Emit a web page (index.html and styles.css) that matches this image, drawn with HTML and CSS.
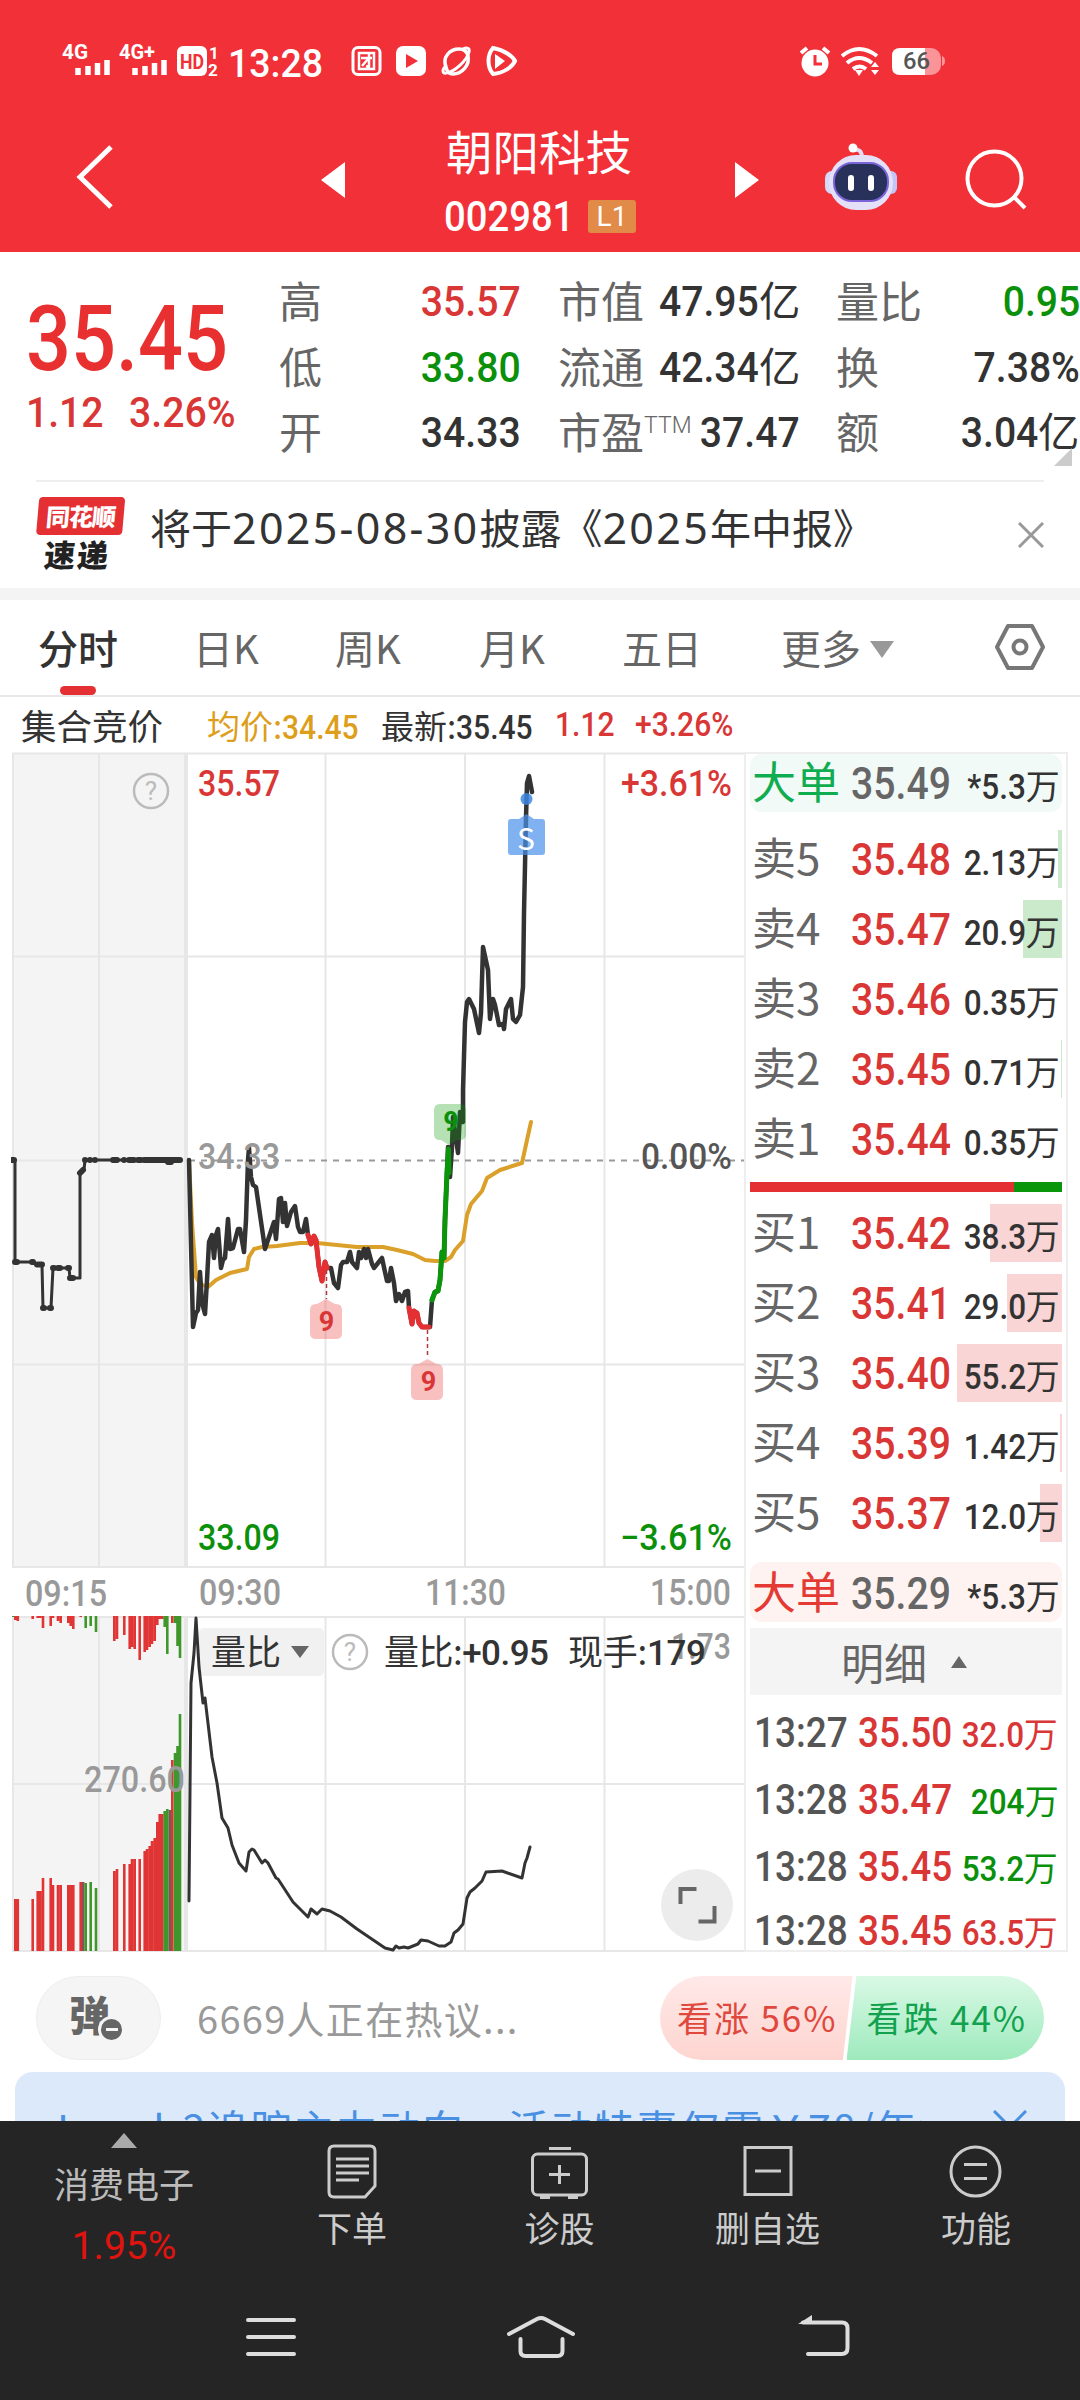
FILE: index.html
```html
<!DOCTYPE html>
<html lang="zh-CN">
<head>
    <meta charset="UTF-8">
    <meta name="viewport" content="width=device-width, initial-scale=1.0">
    <title>朝阳科技 002981</title>
    <link rel="stylesheet" href="styles.css">
</head>
<body>
    <header>
        <div class="status-bar">
            <svg class="status-left" width="470" height="60" viewBox="60 31 470 60" fill="#fff">
                <g class="status-net">
                    <text x="62" y="59" textLength="26" lengthAdjust="spacingAndGlyphs">4G</text>
                    <text x="119" y="59" textLength="36" lengthAdjust="spacingAndGlyphs">4G+</text>
                </g>
                <path d="M78 75v-7M88 75v-9M97.500 75v-12M107 75v-15M135 75v-7M145 75v-9M154.500 75v-12M164 75v-15" stroke="#fff" stroke-width="5.500"/>
                <rect x="177" y="46" width="30" height="30" rx="6"/>
                <text class="status-hd" x="180" y="69" textLength="24" lengthAdjust="spacingAndGlyphs">HD</text>
                <text class="status-sim" x="209" y="59">1</text>
                <text class="status-sim" x="208" y="76">2</text>
                <text class="status-time" x="228" y="77" textLength="95" lengthAdjust="spacingAndGlyphs">13:28</text>
                <rect x="353" y="47.500" width="27" height="27" rx="5" fill="none" stroke="#fff" stroke-width="3"/>
                <path d="M359 53h15v16h-15zM361 58h11M369 54v13l-3-1M368 59l-6 7" fill="none" stroke="#fff" stroke-width="2.500"/>
                <rect x="396" y="46" width="30" height="30" rx="7"/>
                <path d="M406 54l12 7-12 7z" fill="#f13038"/>
                <path d="M446 67c-4-10 4-18 13-18 5 0 8 2 9 7 2 9-6 18-15 18-3 0-6-2-7-7z" fill="none" stroke="#fff" stroke-width="3.500"/>
                <path d="M446 66c-4 3-4 8 0 7 9-1 21-13 23-21 1-4-2-5-6-3" fill="none" stroke="#fff" stroke-width="3"/>
                <path d="M493 48c12 2 20 9 22 13-3 6-11 12-22 13-6-7-6-19 0-26z" fill="none" stroke="#fff" stroke-width="4"/>
                <path d="M495 54l10 7-10 8z"/>
            </svg>
            <svg class="status-right" width="150" height="60" viewBox="798 31 150 60" fill="none" stroke="#fff">
                <circle cx="815" cy="63" r="13.500" fill="#fff" stroke="none"/>
                <path d="M801 53l6-5M829 53l-6-5" stroke-width="4"/>
                <path d="M815 55v9h7" stroke="#f13038" stroke-width="3"/>
                <path d="M842 56q17-14 35 0M847 63q12-10 25 0M853 69q7-5 13 0" stroke-width="4"/>
                <path d="M855 70h8l-4 6z" fill="#fff" stroke="none"/>
                <path d="M871 67l4-5 4 5zM871 70l4 5 4-5z" fill="#fff" stroke="none"/>
                <path d="M900 48h31a10 10 0 0 1 10 10v7a10 10 0 0 1-10 10h-31z" fill="#fa9499" stroke="none"/>
                <path d="M942 56q3 1 3 5t-3 5z" fill="#fa9499" stroke="none"/>
                <path d="M925 48h-25q-8 0-8 8v11q0 8 8 8h25z" fill="#fff" stroke="none"/>
                <text class="status-battery" x="903" y="69" textLength="27" lengthAdjust="spacingAndGlyphs">66</text>
            </svg>
        </div>
        <div class="title-bar">
            <svg class="back" width="40" height="66" viewBox="0 0 40 66" fill="none" stroke="#fff" stroke-width="5"><path d="M36 3L5 33l31 30"/></svg>
            <svg class="prev" width="24" height="36" viewBox="0 0 24 36" fill="#fff"><path d="M24 0v36L0 18z"/></svg>
            <div class="stock-title">
                <h1>朝阳科技</h1>
                <p><span class="num">002981</span><span class="level">L1</span></p>
            </div>
            <svg class="next" width="24" height="36" viewBox="0 0 24 36" fill="#fff"><path d="M0 0v36l24-18z"/></svg>
            <svg class="robot" width="74" height="70" viewBox="824 142 74 70">
                <path d="M862 158c0-7-3-9-8-8" fill="none" stroke="#e3dcf8" stroke-width="4"/>
                <circle cx="853" cy="148" r="4.500" fill="#fff"/>
                <rect x="825" y="171" width="14" height="23" rx="7" fill="#d6d8f8"/>
                <rect x="884" y="171" width="13" height="23" rx="6" fill="#c3c5f6"/>
                <rect x="829" y="155" width="64" height="55" rx="27" fill="#e3e0f8"/>
                <rect x="834" y="163" width="54" height="38" rx="18" fill="#28315a" stroke="#7a64d8" stroke-width="2"/>
                <path d="M851 178v10M871 178v10" stroke="#fff" stroke-width="6" stroke-linecap="round"/>
            </svg>
            <svg class="search" width="62" height="62" viewBox="965 149 62 62" fill="none" stroke="#fff" stroke-width="4"><circle cx="994.500" cy="178.500" r="27"/><path d="M1014 197l11 11"/></svg>
        </div>
    </header>

    <section class="quote">
        <div class="quote-price">
            <div class="price-now num">35.45</div>
            <div class="price-change num"><span>1.12</span><span>3.26%</span></div>
        </div>
        <dl class="quote-grid">
            <dt>高</dt><dd class="num red">35.57</dd>
            <dt>市值</dt><dd class="num">47.95<i>亿</i></dd>
            <dt>量比</dt><dd class="num green">0.95</dd>
            <dt>低</dt><dd class="num green">33.80</dd>
            <dt>流通</dt><dd class="num">42.34<i>亿</i></dd>
            <dt>换</dt><dd class="num">7.38%</dd>
            <dt>开</dt><dd class="num">34.33</dd>
            <dt>市盈<sup>TTM</sup></dt><dd class="num">37.47</dd>
            <dt>额</dt><dd class="num">3.04<i>亿</i></dd>
        </dl>
        <span class="corner"></span>
    </section>

    <section class="notice">
        <div class="notice-logo"><b>同花顺</b><strong>速递</strong></div>
        <p>将于<span>2025-08-30</span>披露《<span>2025</span>年中报》</p>
        <svg width="26" height="26" viewBox="0 0 26 26" stroke="#999" stroke-width="3"><path d="M1 1l24 24M25 1L1 25"/></svg>
    </section>

    <nav class="tabs">
        <a class="active">分时</a>
        <a>日K</a>
        <a>周K</a>
        <a>月K</a>
        <a>五日</a>
        <a class="more">更多<i></i></a>
        <svg width="50" height="48" viewBox="0 0 50 48" fill="none" stroke="#777" stroke-width="4"><path d="M13 3h24l11 21-11 21H13L2 24z" stroke-linejoin="round"/><circle cx="25" cy="24" r="6.500"/></svg>
    </nav>

    <div class="info-line">
        <span>集合竞价</span>
        <span class="avg">均价:<b class="num">34.45</b></span>
        <span class="last">最新:<b class="num">35.45</b></span>
        <b class="num red">1.12</b>
        <b class="num red">+3.26%</b>
    </div>

    <main>
        <svg class="chart" width="733" height="1202" viewBox="11 752 733 1202">
            <rect x="13" y="753" width="174" height="814" fill="#f4f4f4"/>
            <rect x="13" y="1617" width="174" height="334" fill="#f4f4f4"/>
            <g class="grid">
                <path d="M12 753.500H744M12 956.500H744M12 1364.500H744M12 1567H744M12 1617H744M12 1784H744M12 1951H744"/>
                <path d="M13 753V1567M99 753V1567M325.500 753V1567M465 753V1567M604.500 753V1567M13 1617V1951M99 1617V1951M325.500 1617V1951M465 1617V1951M604.500 1617V1951"/>
                <path class="split" d="M186 753V1567M186 1617V1951"/>
                <path d="M13 1160.500H187"/>
            </g>
            <path d="M189 1160.500H744" stroke="#999" stroke-width="2" stroke-dasharray="6 6"/>

            <!-- auction volume -->
            <g stroke-width="2.600" fill="none">
                <path stroke="#e03534" d="M15.300 1951V1899M17.800 1951V1899M32.700 1951V1899M37.700 1951V1891M40.300 1951V1891M43 1951V1878M50.700 1951V1878M53 1951V1885M58 1951V1885M60.700 1951V1885M68.300 1951V1885M70.700 1951V1885M73.300 1951V1885M80.700 1951V1882M114.300 1951V1871M117 1951V1869M124.300 1951V1864M129.700 1951V1864M132 1951V1859M134.700 1951V1859M139.700 1951V1859M144.700 1951V1851M147 1951V1849M149.700 1951V1846M152 1951V1841M154.700 1951V1838M157.300 1951V1822M159.700 1951V1814M162.300 1951V1814M172.300 1951V1760"/>
                <path stroke="#805555" d="M83.200 1951V1882M169.800 1951V1810"/>
                <path stroke="#3f972b" d="M85.700 1951V1883M90.700 1951V1882M96 1951V1888M164.700 1951V1811M167.300 1951V1809M175 1951V1753M177.500 1951V1746M180 1951V1714"/>
                <path stroke="#e03534" d="M15.300 1616V1620M17.800 1616V1621M32.700 1616V1619M37.700 1616V1618M40.300 1616V1618M43 1616V1628M50.700 1616V1626M53 1616V1618M58 1616V1621M60.700 1616V1623M68.300 1616V1623M70.700 1616V1626M73.300 1616V1629M80.700 1616V1617M114.300 1616V1641M117 1616V1639M124.300 1616V1635M129.700 1616V1649M132 1616V1647M134.700 1616V1649M139.700 1616V1660M144.700 1616V1652M147 1616V1650M149.700 1616V1647M152 1616V1644M154.700 1616V1641M157.300 1616V1625M159.700 1616V1619M162.300 1616V1619M172.300 1616V1623"/>
                <path stroke="#3f972b" d="M13.300 1616V1617M85.700 1616V1628M90.700 1616V1626M96 1616V1632M164.700 1616V1627M167.300 1616V1654M175 1616V1623M177.500 1616V1646M180 1616V1658"/>
            </g>

            <!-- auction price -->
            <path class="line thin" d="M12 1160H15V1262H33L37 1265H42L43 1308H51L53 1268H69L70 1278H80V1173L84 1170L85 1160H181"/>
            <path class="line dots" d="M12 1160h2M15 1262h2M32 1262l1 0M37 1264.500h5M43 1308h1M50 1308h1M53 1268h1M58 1268h2M68 1268h1M70 1278h3M80 1173l3-3M85 1160h0M90 1160h0M95 1160h0M113 1160h4M124 1160h0M129 1160h5M138 1160h3M144 1160h36M168 1162h3"/>

            <!-- average and price -->
            <path class="line avg-line" d="M189 1160L192 1223L196 1277L200 1284L208 1287L216 1280L230 1273L247 1269L249 1257L254 1249L262 1247L277 1246L300 1243L317 1243L337 1245L357 1247L383 1247L397 1250L413 1254L425 1260L435 1261L445 1261L451 1257L455 1250L463 1241L467 1215L471 1204L482 1191L487 1178L500 1170L522 1163L527 1140L531 1122"/>
            <path class="line" d="M189 1160L193 1327L196 1313L198 1310L200 1272L202 1303L205 1314L207 1280L209 1242L212 1235L214 1258L216 1235L218 1229L221 1268L223 1260L225 1258L228 1219L230 1249L233 1248L238 1229L240 1229L244 1252L246 1220L248 1160L249 1148L251 1177L253 1185L256 1187L265 1249L274 1222L276 1239L279 1199L281 1198L283 1222L285 1203L287 1226L291 1212L295 1206L298 1227L300 1232L303 1232L306 1219L308 1235L311 1244L314 1236L316 1240L319 1267L322 1281L325 1262L327 1268L331 1268L334 1283L338 1288L341 1265L343 1262L347 1262L350 1252L352 1262L357 1268L359 1252L361 1258L364 1249L366 1258L368 1249L372 1264L374 1268L382 1258L385 1272L387 1281L389 1281L391 1268L394 1283L396 1301L399 1294L402 1301L405 1292L408 1291L409 1308L412 1324L414 1311L417 1313L419 1323L422 1327L430 1327L432 1300L435 1292L438 1291L440 1280L442 1252L444 1258L445 1220L447 1173L448 1147L450 1177L452 1147L453 1117L458 1153L460 1112L463 1122L463 1090L465 1022L467 1002L469 999L474 1009L479 1033L481 1013L483 947L488 970L490 1019L493 999L495 1005L499 1025L503 1024L504 1029L506 1009L511 999L513 1019L516 1022L520 1015L523 987L524 913L526 818L527 783L529 776L532 792"/>
            <path class="line red-line" d="M308 1235L311 1244L314 1236L316 1240L319 1267L322 1281L325 1262L327 1268M409 1308L412 1324L414 1311L417 1313L419 1323L422 1327L429 1327"/>
            <path class="line green-line" d="M432 1300L435 1292L438 1291L440 1280L442 1252L444 1258L445 1220L447 1173L448.500 1149L449 1173"/>

            <!-- nine-turn marks -->
            <path d="M326.500 1270V1299M427.500 1330V1358" stroke="#b03a3a" stroke-width="1.500" stroke-dasharray="4 3"/>
            <g fill="#ee4040" fill-opacity=".33">
                <path d="M317 1304l9-5 9 5h1q6 0 6 6v23q0 6-6 6h-20q-6 0-6-6v-23q0-6 6-6z"/>
                <path d="M418.500 1364l9-5 9 5h.500q6 0 6 6v24q0 6-6 6h-20q-6 0-6-6v-24q0-6 6-6z"/>
            </g>
            <path d="M440 1104h20q6 0 6 6v24q0 6-6 6h-3l-8 5-8-5h-1q-6 0-6-6v-24q0-6 6-6z" fill="#0a9a0a" fill-opacity=".3"/>
            <text class="mark red" x="326.500" y="1331">9</text>
            <text class="mark red" x="428.500" y="1391">9</text>
            <text class="mark green" x="451" y="1131">9</text>
            <circle cx="526.500" cy="799" r="6" fill="#3c86e0" fill-opacity=".85"/>
            <path d="M519 819l7.500-5 7.500 5h8q3 0 3 3v30q0 3-3 3h-31q-3 0-3-3v-30q0-3 3-3z" fill="#4a90ea" fill-opacity=".7"/>
            <text class="mark sell" x="526" y="850">S</text>

            <!-- axis labels -->
            <g class="axis">
                <text class="red" x="198" y="796" textLength="82" lengthAdjust="spacingAndGlyphs">35.57</text>
                <text x="198" y="1169" textLength="82" lengthAdjust="spacingAndGlyphs" fill="#999">34.33</text>
                <text class="green" x="198" y="1550" textLength="82" lengthAdjust="spacingAndGlyphs">33.09</text>
                <text class="red" x="621" y="796" textLength="111" lengthAdjust="spacingAndGlyphs">+3.61%</text>
                <text x="641" y="1169" textLength="91" lengthAdjust="spacingAndGlyphs" fill="#555">0.00%</text>
                <text class="green" x="620" y="1550" textLength="112" lengthAdjust="spacingAndGlyphs">−3.61%</text>
                <text x="25" y="1606" textLength="82" lengthAdjust="spacingAndGlyphs" fill="#999">09:15</text>
                <text x="199" y="1605" textLength="82" lengthAdjust="spacingAndGlyphs" fill="#999">09:30</text>
                <text x="425" y="1605" textLength="81" lengthAdjust="spacingAndGlyphs" fill="#999">11:30</text>
                <text x="650" y="1605" textLength="81" lengthAdjust="spacingAndGlyphs" fill="#999">15:00</text>
                <text x="84" y="1792" textLength="101" lengthAdjust="spacingAndGlyphs" fill="#999">270.60</text>
                <text x="671" y="1659" textLength="60" lengthAdjust="spacingAndGlyphs" fill="#999">1.73</text>
            </g>
            <g class="help">
                <circle cx="151" cy="791" r="17"/><text x="151" y="800">?</text>
            </g>

            <!-- volume ratio -->
            <rect x="199" y="1628" width="125" height="48" rx="5" fill="#f1f1f1"/>
            <path d="M291 1646h18l-9 12z" fill="#666"/>
            <path class="line thin" d="M189 1901L191 1683L194 1653L196 1618L199 1667L203 1703L205 1698L212 1757L217 1783L222 1818L228 1828L232 1845L239 1863L246 1871L249 1852L252 1849L254 1850L262 1863L265 1860L268 1863L276 1878L278 1879L293 1902L308 1917L311 1909L317 1914L322 1909L330 1911L341 1917L357 1929L385 1948L393 1950L396 1946L399 1948L404 1947L408 1948L418 1944L421 1940L428 1941L439 1946L445 1946L451 1942L454 1933L458 1930L463 1924L467 1898L470 1892L475 1888L482 1881L486 1872L502 1871L522 1878L525 1863L527 1858L530 1847"/>
            <g class="help">
                <circle cx="350" cy="1652" r="17"/><text x="350" y="1661">?</text>
            </g>
            <g class="indicator">
                <text x="211" y="1665" textLength="70">量比</text>
                <text x="384" y="1665" textLength="165">量比:<tspan class="digits">+0.95</tspan></text>
                <text x="568" y="1665" textLength="138">现手:<tspan class="digits">179</tspan></text>
            </g>
            <circle cx="697" cy="1905" r="36" fill="#ececec"/>
            <path d="M680.500 1904v-15h16M714.500 1906v15.500h-16" fill="none" stroke="#666" stroke-width="4"/>
        </svg>

        <aside class="book">
            <div class="row big sell-big"><span>大单</span><b>35.49</b><em>*5.3<i>万</i></em></div>
            <div class="levels asks">
                <div class="row"><span>卖5</span><b>35.48</b><em>2.13<i>万</i></em><u style="width:4px"></u></div>
                <div class="row"><span>卖4</span><b>35.47</b><em>20.9<i>万</i></em><u style="width:39px"></u></div>
                <div class="row"><span>卖3</span><b>35.46</b><em>0.35<i>万</i></em></div>
                <div class="row"><span>卖2</span><b>35.45</b><em>0.71<i>万</i></em><u style="width:1px"></u></div>
                <div class="row"><span>卖1</span><b>35.44</b><em>0.35<i>万</i></em></div>
            </div>
            <div class="ratio"><i style="width:264px"></i></div>
            <div class="levels bids">
                <div class="row"><span>买1</span><b>35.42</b><em>38.3<i>万</i></em><u style="width:72px"></u></div>
                <div class="row"><span>买2</span><b>35.41</b><em>29.0<i>万</i></em><u style="width:55px"></u></div>
                <div class="row"><span>买3</span><b>35.40</b><em>55.2<i>万</i></em><u style="width:105px"></u></div>
                <div class="row"><span>买4</span><b>35.39</b><em>1.42<i>万</i></em><u style="width:2px"></u></div>
                <div class="row"><span>买5</span><b>35.37</b><em>12.0<i>万</i></em><u style="width:22px"></u></div>
            </div>
            <div class="row big buy-big"><span>大单</span><b>35.29</b><em>*5.3<i>万</i></em></div>
            <div class="detail-head">明细<i></i></div>
            <div class="ticks">
                <div><span>13:27</span><b>35.50</b><em class="red">32.0<i>万</i></em></div>
                <div><span>13:28</span><b>35.47</b><em class="green">204<i>万</i></em></div>
                <div><span>13:28</span><b>35.45</b><em class="green">53.2<i>万</i></em></div>
                <div><span>13:28</span><b>35.45</b><em class="red">63.5<i>万</i></em></div>
            </div>
        </aside>
    </main>

    <section class="comment">
        <div class="danmu"><span>弹</span><i></i></div>
        <p>6669人正在热议...</p>
        <div class="vote">
            <div class="up">看涨 56%</div>
            <div class="down">看跌 44%</div>
        </div>
    </section>

    <div class="promo">
        <p>Level-2追踪主力动向，活动特惠仅需￥78/年&gt;</p>
        <svg width="34" height="34" viewBox="0 0 34 34" stroke="#4a90e2" stroke-width="3"><path d="M1 1l32 32M33 1L1 33"/></svg>
    </div>

    <footer>
        <div class="toolbar">
            <div class="sector"><i></i><span>消费电子</span><b>1.95%</b></div>
            <div class="tool">
                <svg width="60" height="58" viewBox="322 2142 60 58"><path d="M334 2146h36q5 0 5 5v35l-10 11h-31q-5 0-5-5v-41q0-5 5-5z"/><path d="M336 2159h33M336 2166h33M336 2173h33M336 2180h23"/></svg>
                <span>下单</span>
            </div>
            <div class="tool">
                <svg width="60" height="58" viewBox="530 2142 60 58"><rect x="532.500" y="2154" width="54" height="41" rx="5"/><path d="M549 2148.500h22M559.500 2165v19M549 2174.500h21M540 2197.500h10M568 2197.500h10"/></svg>
                <span>诊股</span>
            </div>
            <div class="tool">
                <svg width="60" height="58" viewBox="737 2142 60 58"><rect x="744" y="2147.500" width="46" height="47"/><path d="M754 2171h26"/></svg>
                <span>删自选</span>
            </div>
            <div class="tool">
                <svg width="60" height="58" viewBox="946 2142 60 58"><circle cx="975.500" cy="2171.500" r="24.500"/><path d="M964 2164.500h23M964 2178.500h23"/></svg>
                <span>功能</span>
            </div>
        </div>
        <div class="system-nav">
            <svg width="52" height="46" viewBox="245 2314 52 46"><path d="M248 2320h46M248 2337h46M248 2354h46"/></svg>
            <svg width="72" height="46" viewBox="505 2314 72 46"><path d="M509 2334l28-15q4-2 8 0l28 15M520.500 2339v12q0 5 5 5h32q5 0 5-5v-12"/></svg>
            <svg width="56" height="46" viewBox="796 2314 56 46"><path d="M803 2322.500h39q5.500 0 5.500 5.500v20q0 6-6 6H808"/><path d="M812 2315v9h-14z" class="solid"/></svg>
        </div>
    </footer>
</body>
</html>
```
FILE: styles.css
```css
* {
    box-sizing: border-box;
}
body {
    font-family: "Noto Sans CJK SC", sans-serif;
    margin: 0;
    padding: 0;
    width: 1080px;
    height: 2400px;
    overflow: hidden;
    background: #fff;
    color: #333;
}
h1, p, dl, dd {
    margin: 0;
}
i, em {
    font-style: normal;
}
svg {
    display: block;
}
/* narrow digits */
.num {
    display: inline-block;
    font-family: Roboto, "Noto Sans CJK SC", sans-serif;
    font-weight: 500;
    transform: scaleX(.91);
    transform-origin: left;
}
.num i, .row em i, .ticks em i {
    display: inline-block;
    width: 1.110em;
    transform: scaleX(1.110);
    transform-origin: left;
    text-align: left;
}
.red {
    color: #d93636;
    fill: #d93636;
}
.green {
    color: #0a900a;
    fill: #0a900a;
}

/* header */
header {
    height: 252px;
    background: #f13038;
    color: #fff;
}
.status-bar {
    height: 120px;
    padding: 31px 132px 0 60px;
    display: flex;
    justify-content: space-between;
}
.status-bar text {
    font-family: Roboto, sans-serif;
    font-weight: 500;
}
.status-net text {
    font-size: 21px;
    font-weight: 700;
}
.status-bar .status-hd {
    font-size: 21px;
    font-weight: 700;
    fill: #f13038;
}
.status-bar .status-sim {
    font-size: 17px;
    font-weight: 700;
}
.status-bar .status-time {
    font-size: 38px;
}
.status-bar .status-battery {
    font-size: 23px;
    fill: #555;
    stroke: none;
}
.title-bar {
    height: 132px;
    display: grid;
    grid-template-columns: 245px 100px 390px 90px 141px 1fr;
}
.back {
    margin: 24px 0 0 75px;
}
.prev {
    margin: 42px 0 0 76px;
}
.next {
    margin: 42px 0 0 0;
}
.robot {
    margin: 22px 0 0 -1px;
}
.search {
    margin: 29px 0 0 -1px;
}
.stock-title {
    padding-left: 101px;
}
.stock-title h1 {
    font-size: 46.500px;
    font-weight: 400;
    line-height: 60px;
    height: 63px;
}
.stock-title p {
    display: flex;
    align-items: center;
    height: 66px;
    font-size: 42px;
}
.stock-title .num {
    width: 142px;
    margin-left: -2px;
}
.level {
    width: 48px;
    height: 33px;
    margin-left: 2px;
    background: #e28b48;
    border-radius: 3px;
    font: 400 28px/33px Roboto, sans-serif;
    text-align: center;
}

/* quote */
.quote {
    height: 228px;
    padding: 17px 0 0 26px;
    display: flex;
    position: relative;
}
.quote-price {
    width: 253px;
}
.price-now {
    font-size: 90px;
    line-height: 100px;
    margin-top: 21px;
    color: #e93030;
    transform: scaleX(.88);
}
.price-change {
    display: flex;
    gap: 28px;
    width: 240px;
    font-size: 43px;
    line-height: 50px;
    margin-top: -3px;
    color: #d93636;
}
.quote-grid {
    flex: 1;
    display: grid;
    grid-template-columns: 90px 189px 86px 192px 110px 134px;
    grid-auto-rows: 65.500px;
    line-height: 65.500px;
}
.quote-grid dt {
    font-size: 43px;
    color: #666;
    white-space: nowrap;
    line-height: 60px;
}
.quote-grid dd {
    font-size: 43px;
    justify-self: end;
    transform-origin: right;
    white-space: nowrap;
}
.quote-grid dd:nth-of-type(3n+1) {
    margin-right: 37px;
}
.quote-grid dd:nth-of-type(3n+2) {
    margin-right: 36px;
}
.quote-grid i {
    font-weight: 400;
    font-size: 41px;
}
.quote-grid sup {
    font: 300 23px/1 Roboto, sans-serif;
    vertical-align: 16px;
}
.corner {
    position: absolute;
    right: 8px;
    bottom: 14px;
    border-left: 18px solid transparent;
    border-bottom: 18px solid #ccc;
}

/* notice */
.notice {
    height: 120px;
    margin-left: 36px;
    width: 1008px;
    border-top: 2px solid #eee;
    display: flex;
    align-items: flex-start;
    position: relative;
}
.notice::after {
    content: "";
    position: absolute;
    left: -36px;
    bottom: 0;
    width: 1080px;
    height: 12px;
    background: #f4f4f4;
}
.notice-logo {
    width: 86px;
    margin: 15px 2px 0 0;
    transform: skewX(-5deg);
    text-align: center;
}
.notice-logo b {
    display: block;
    height: 38px;
    border-radius: 4px;
    background: #e43033;
    color: #fff;
    font-size: 24px;
    font-weight: 900;
    line-height: 37px;
    letter-spacing: -1px;
}
.notice-logo strong {
    display: block;
    font-size: 31px;
    font-weight: 900;
    line-height: 38px;
    letter-spacing: 2px;
    color: #222;
}
.notice p {
    margin: 11px 0 0 26px;
    width: 868px;
    font-size: 41px;
    line-height: 66px;
    white-space: nowrap;
}
.notice p span {
    font-family: "Noto Sans", sans-serif;
    font-size: 43px;
    line-height: 1;
    letter-spacing: 2.300px;
}
.notice svg {
    margin-top: 40px;
}

/* tabs */
.tabs {
    height: 97px;
    border-bottom: 2px solid #e9e9e9;
    display: grid;
    grid-template-columns: 155px 142px 144px 143px 159px 214px 50px;
    padding-left: 38px;
    font-size: 40px;
    line-height: 95px;
    color: #666;
}
.tabs a.active {
    color: #333;
    font-weight: 500;
    position: relative;
}
.tabs a.active::after {
    content: "";
    position: absolute;
    left: 22px;
    bottom: 0;
    width: 36px;
    height: 9px;
    border-radius: 5px;
    background: #e43033;
}
.tabs .more i {
    display: inline-block;
    margin-left: 9px;
    vertical-align: 6px;
    border: 12px solid transparent;
    border-top: 17px solid #999;
    border-bottom: 0;
}
.tabs svg {
    margin-top: 23px;
}
.info-line {
    height: 55px;
    padding-left: 21px;
    display: grid;
    grid-template-columns: 186px 174px 174px 80px 1fr;
    font-size: 35.500px;
    line-height: 56px;
    white-space: nowrap;
}
.info-line .avg, .info-line .last {
    font-size: 33px;
}
.info-line b {
    font-size: 33px;
}
.info-line .avg {
    color: #dd9e1b;
}

/* chart */
main {
    display: flex;
    padding-left: 11px;
    height: 1202px;
}
.grid {
    stroke: #e7e7e7;
    stroke-width: 2;
}
.split {
    stroke-width: 4;
}
.line {
    fill: none;
    stroke: #333;
    stroke-width: 4.500;
    stroke-linejoin: round;
    stroke-linecap: round;
}
.thin {
    stroke-width: 3;
}
.dots {
    stroke-width: 6;
}
.avg-line {
    stroke: #dba02a;
    stroke-width: 4;
}
.red-line {
    stroke: #e43033;
    stroke-width: 5;
}
.green-line {
    stroke: #0a950a;
    stroke-width: 5;
}
.axis text {
    font: 500 36px Roboto, sans-serif;
}
.mark {
    font: 700 27px Roboto, sans-serif;
    text-anchor: middle;
}
.sell {
    font: 400 30px "Noto Sans CJK SC", sans-serif;
    fill: #fff;
}
.help circle {
    fill: none;
    stroke: #bbb;
    stroke-width: 2.500;
}
.help text {
    font: 400 26px Roboto, sans-serif;
    fill: #bbb;
    text-anchor: middle;
}
.indicator text {
    font-size: 35px;
    fill: #333;
}
.indicator .digits {
    font-family: Roboto, sans-serif;
    font-weight: 500;
}

/* order book */
.book {
    width: 324px;
    height: 1200px;
    border: 2px solid #eee;
    padding: 0 4px;
}
.row {
    height: 58px;
    display: grid;
    grid-template-columns: 99px 105px minmax(0, 1fr);
    align-items: baseline;
    position: relative;
    padding: 0 2px 0 2px;
    line-height: 52px;
    white-space: nowrap;
}
.row span {
    font-size: 44px;
    color: #666;
}
.row b {
    font: 500 44px/52px Roboto, sans-serif;
    color: #d93636;
    transform: scaleX(.89);
    transform-origin: left;
}
.row em, .ticks em {
    font: 500 35px/52px Roboto, "Noto Sans CJK SC", sans-serif;
    justify-self: end;
    transform: scaleX(.9);
    transform-origin: right;
}
.row em i, .ticks em i {
    font-family: "Noto Sans CJK SC", sans-serif;
    font-weight: 400;
    font-size: 34px;
}
.row u {
    position: absolute;
    z-index: -1;
    right: 0;
    top: 0;
    height: 58px;
}
.big {
    border-radius: 12px;
}
.big b {
    color: #666;
}
.sell-big {
    background: #f1faf6;
}
.sell-big span {
    color: #10ad50;
}
.buy-big {
    background: #fff3f2;
    height: 60px;
    margin-top: 20px;
    padding-top: 2px;
}
.buy-big span {
    color: #e43a33;
}
.levels {
    display: grid;
    grid-template-columns: 100%;
    gap: 12px;
}
.asks {
    margin-top: 18px;
}
.asks u {
    background: #cbe9cb;
}
.bids u {
    background: #f9d5d5;
}
.ratio {
    height: 10px;
    margin: 14px 0 12px;
    background: #0a960a;
}
.ratio i {
    display: block;
    height: 10px;
    background: #e43033;
}
.detail-head {
    height: 67px;
    margin-top: 6px;
    background: #f4f4f4;
    color: #666;
    font-size: 43px;
    line-height: 66px;
    padding-left: 91px;
}
.detail-head i {
    display: inline-block;
    margin-left: 24px;
    vertical-align: 12px;
    border: 8px solid transparent;
    border-bottom: 12px solid #666;
    border-top: 0;
}
.ticks {
    padding: 7px 4px 0 4px;
}
.ticks div {
    display: grid;
    grid-template-columns: 104px 100px minmax(0, 1fr);
    align-items: baseline;
    height: 67px;
    white-space: nowrap;
}
.ticks div:last-child {
    margin-top: -3px;
}
.ticks span, .ticks b {
    font: 500 42px/62px Roboto, sans-serif;
    color: #555;
    transform: scaleX(.88);
    transform-origin: left;
}
.ticks b {
    color: #d93636;
}

/* comment */
.comment {
    height: 118px;
    padding: 22px 36px 0;
    display: flex;
}
.danmu {
    width: 125px;
    height: 84px;
    border-radius: 42px;
    background: #f5f5f5;
    border: 1px solid #eee;
    position: relative;
    font-size: 41px;
    font-weight: 900;
    line-height: 72px;
    color: #666;
    padding-left: 32px;
}
.danmu i {
    position: absolute;
    left: 61px;
    top: 39px;
    width: 27px;
    height: 27px;
    border-radius: 50%;
    border: 3px solid #f5f5f5;
    background: linear-gradient(#f5f5f5, #f5f5f5) center / 12px 3px no-repeat #666;
}
.comment p {
    margin-left: 36px;
    width: 463px;
    font-size: 38px;
    line-height: 84px;
    letter-spacing: 1.300px;
    color: #999;
}
.vote {
    width: 384px;
    height: 84px;
    border-radius: 42px;
    overflow: hidden;
    display: flex;
    font-size: 35px;
    line-height: 82px;
    letter-spacing: 1.900px;
    white-space: nowrap;
}
.up {
    width: 195px;
    padding-left: 17px;
    background: linear-gradient(#ffe9e8, #fdd5d0);
    color: #e0483d;
    clip-path: polygon(0 0, 100% 0, 95% 100%, 0 100%);
}
.down {
    width: 200px;
    margin-left: -6px;
    padding-left: 20px;
    background: linear-gradient(#d9f9e5, #9eeabd);
    color: #12a24f;
    clip-path: polygon(5% 0, 100% 0, 100% 100%, 0 100%);
}
.promo {
    height: 49px;
    margin: 0 15px;
    padding: 0 38px 0 42px;
    overflow: hidden;
    border-radius: 18px 18px 0 0;
    background: #dbe9fb;
    color: #4a90e2;
    display: flex;
    justify-content: space-between;
    font-size: 41px;
    line-height: 60px;
    letter-spacing: 1.900px;
    white-space: nowrap;
}
.promo p {
    margin-top: 25px;
}
.promo svg {
    flex: none;
    margin-top: 38px;
}

/* footer */
footer {
    height: 279px;
    background: #252525;
    color: #ccc;
}
.toolbar {
    height: 180px;
    display: grid;
    grid-template-columns: 248px 208px 207px 209px 208px;
    text-align: center;
    font-size: 35px;
}
.sector {
    display: flex;
    flex-direction: column;
    align-items: center;
    color: #bbb;
}
.sector i {
    margin: 12px 0 10px;
    border: 13px solid transparent;
    border-bottom: 15px solid #aaa;
    border-top: 0;
}
.sector span {
    line-height: 50px;
}
.sector b {
    font: 400 39px/44px Roboto, sans-serif;
    margin-top: 16px;
    color: #e0140f;
}
.tool svg {
    margin: 21px auto 0;
    fill: none;
    stroke: #ccc;
    stroke-width: 3;
}
.tool span {
    display: block;
    line-height: 54px;
}
.system-nav {
    display: flex;
    padding: 13px 0 0 245px;
    gap: 208px;
}
.system-nav svg {
    fill: none;
    stroke: #ddd;
    stroke-width: 4;
    stroke-linecap: round;
}
.system-nav svg:last-child {
    margin-left: 11px;
}
.system-nav .solid {
    fill: #ddd;
    stroke: none;
}
```
